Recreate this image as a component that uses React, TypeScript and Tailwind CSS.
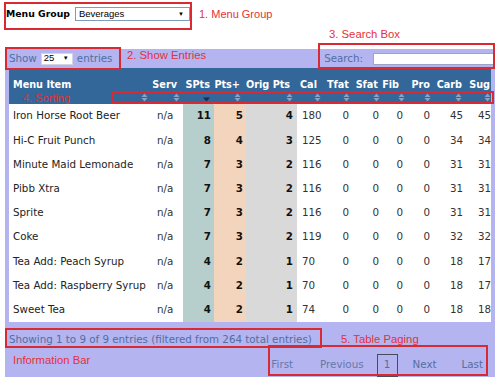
import React from "react";

/* ---------- Types ---------- */
type Col = {
  label: string;
  w: string;
  th: string;
  arrow: string;
  td: string;
};

type Row = (string | number)[];

/* ---------- Data ---------- */
const cols: Col[] = [
  { label: "Menu Item", w: "w-[141px]", th: "text-left pl-[4px]", arrow: "pr-[2px]", td: "text-left pl-[4px] text-[#222]" },
  { label: "Serv", w: "w-[33px]", th: "text-right pr-[6px]", arrow: "pr-[3px]", td: "text-left pl-[7px]" },
  { label: "SPts", w: "w-[31px]", th: "text-right pr-[4px]", arrow: "pr-[4px]", td: "text-right pr-[3px] font-bold text-[#111] bg-[#b6cfcd]" },
  { label: "Pts+", w: "w-[32px]", th: "text-right pr-[6px]", arrow: "pr-[5px]", td: "text-right pr-[3px] font-bold text-[#111] bg-[#f3d4bd]" },
  { label: "Orig Pts", w: "w-[51px]", th: "text-right pr-[7px]", arrow: "pr-[4px]", td: "text-right pr-[4px] font-bold text-[#111] bg-[#d9d9d9]" },
  { label: "Cal", w: "w-[29px]", th: "text-left pl-[3px]", arrow: "pr-[5px]", td: "text-left pl-[5px]" },
  { label: "Tfat", w: "w-[28px]", th: "text-right pr-[5px]", arrow: "pr-[4px]", td: "text-right pr-[5px]" },
  { label: "Sfat", w: "w-[28px]", th: "text-right pr-[4px]", arrow: "pr-[2px]", td: "text-right pr-[3px]" },
  { label: "Fib", w: "w-[25px]", th: "text-right pr-[8px]", arrow: "pr-[2px]", td: "text-right pr-[4px]" },
  { label: "Pro", w: "w-[27px]", th: "text-right pr-[4px]", arrow: "pr-[3px]", td: "text-right pr-[4px]" },
  { label: "Carb", w: "w-[30px]", th: "text-right pr-[2px]", arrow: "pr-[2px]", td: "text-right pr-[1px]" },
  { label: "Sug", w: "w-[27px]", th: "text-right pr-[1px]", arrow: "pr-[0px]", td: "text-right pr-[0px]" },
];

const rows: Row[] = [
  ["Iron Horse Root Beer", "n/a", 11, 5, 4, 180, 0, 0, 0, 0, 45, 45],
  ["Hi-C Fruit Punch", "n/a", 8, 4, 3, 125, 0, 0, 0, 0, 34, 34],
  ["Minute Maid Lemonade", "n/a", 7, 3, 2, 116, 0, 0, 0, 0, 31, 31],
  ["Pibb Xtra", "n/a", 7, 3, 2, 116, 0, 0, 0, 0, 31, 31],
  ["Sprite", "n/a", 7, 3, 2, 116, 0, 0, 0, 0, 31, 31],
  ["Coke", "n/a", 7, 3, 2, 119, 0, 0, 0, 0, 32, 32],
  ["Tea Add: Peach Syrup", "n/a", 4, 2, 1, 70, 0, 0, 0, 0, 18, 17],
  ["Tea Add: Raspberry Syrup", "n/a", 4, 2, 1, 70, 0, 0, 0, 0, 18, 17],
  ["Sweet Tea", "n/a", 4, 2, 1, 74, 0, 0, 0, 0, 18, 18],
];

/* ---------- Sort arrows ---------- */
function SortIcon({ active }: { active?: boolean }) {
  if (active) {
    return (
      <svg width="7" height="9" viewBox="0 0 7 9">
        <path d="M0 4.5h7L3.5 8.5z" fill="#1c2b47" />
      </svg>
    );
  }
  return (
    <svg width="7" height="9" viewBox="0 0 7 9">
      <path d="M3.5 0.5L6.5 4H0.5z" fill="#8aa1c4" />
      <path d="M0.5 5h6L3.5 8.5z" fill="#8aa1c4" />
    </svg>
  );
}

/* ---------- Main Component ---------- */
export default function App() {
  const red = "border-2 border-[#d92a34]";
  const note = "absolute font-['Liberation_Sans',Arial,sans-serif] text-[#e4313b] leading-[14px] whitespace-nowrap";

  return (
    <div className="relative w-[500px] h-[384px] bg-white overflow-hidden font-['DejaVu_Sans',sans-serif]">
      {/* menu group */}
      <div className="h-[49px] pt-[7px] pl-[6px]">
        <div className="h-[14px] flex items-center gap-[5px]">
          <span className="text-[9.3px] font-bold text-black">Menu Group</span>
          <div className="w-[115px] h-[14px] bg-white border border-[#7f9db9] flex items-center justify-between pl-[3px] pr-[5px] font-['Liberation_Sans',Arial,sans-serif] text-[9.5px] text-black">
            <span>Beverages</span>
            <span className="text-[6px]">▼</span>
          </div>
        </div>
      </div>

      {/* lavender wrapper */}
      <div className="ml-[5px] w-[490px] bg-[#b4b4f0]">
        <div className="h-[19px] flex items-center justify-between pl-[4px] text-[10.3px] text-[#4f6fa3]">
          <div className="flex items-center">
            <span>Show</span>
            <span className="ml-[4px] w-[32px] h-[12px] bg-white border border-[#d4d4e4] flex items-center justify-between pl-[2px] pr-[3px] font-['Liberation_Sans',Arial,sans-serif] text-[9.5px] text-black">
              25<span className="text-[6px]">▼</span>
            </span>
            <span className="ml-[4px]">entries</span>
          </div>
          <div className="flex items-center">
            <span>Search:</span>
            <span className="ml-[10px] w-[122px] h-[12px] bg-white border border-[#9fa2c2]" />
          </div>
        </div>

        <table className="ml-[4px] w-[482px] table-fixed border-collapse">
          <colgroup>
            {cols.map((c) => (
              <col key={c.label} className={c.w} />
            ))}
          </colgroup>
          <thead>
            <tr className="bg-[#336699] h-[36px]">
              {cols.map((c) => (
                <th key={c.label} className="p-0 align-top font-bold text-white text-[9.7px]">
                  <div className={`mt-[11px] h-[12px] leading-[12px] whitespace-nowrap ${c.th}`}>{c.label}</div>
                  <div className={`mt-[2px] h-[9px] flex justify-end ${c.arrow}`}>
                    <SortIcon active={c.label === "SPts"} />
                  </div>
                </th>
              ))}
            </tr>
          </thead>
          <tbody className="bg-white text-[10.3px] text-[#333]">
            {rows.map((r, i) => (
              <tr key={i} className="h-[24.2px]">
                {r.map((v, j) => (
                  <td key={j} className={`p-0 whitespace-nowrap ${cols[j].td}`}>
                    {v}
                  </td>
                ))}
              </tr>
            ))}
          </tbody>
        </table>

        <div className="h-[23px] pt-[11px] pl-[4px] leading-[12px] text-[10.3px] text-[#4f6fa3] whitespace-nowrap">
          Showing 1 to 9 of 9 entries (filtered from 264 total entries)
        </div>

        <div className="mt-[9px] h-[23px] flex items-center justify-end pr-[12px] text-[10.3px]">
          <span className="text-[#6579a6]">First</span>
          <span className="ml-[27px] text-[#6579a6]">Previous</span>
          <span className="ml-[13px] w-[21px] h-[23px] border border-[#4b4b5e] flex items-center justify-center text-[#55709f]">1</span>
          <span className="ml-[15px] text-[#55709f]">Next</span>
          <span className="ml-[25px] text-[#55709f]">Last</span>
        </div>
      </div>

      {/* annotations */}
      <div className={`absolute left-[4px] top-[2px] w-[188px] h-[28px] ${red}`} />
      <span className={`${note} left-[199px] top-[7px] text-[11px]`}>1. Menu Group</span>

      <div className={`absolute left-[5px] top-[47px] w-[116px] h-[23px] ${red}`} />
      <span className={`${note} left-[127px] top-[48px] text-[11.3px]`}>2. Show Entries</span>

      <span className={`${note} left-[329px] top-[27px] text-[11.3px]`}>3. Search Box</span>
      <div className={`absolute left-[318px] top-[43px] w-[177px] h-[26px] ${red}`} />

      <span className={`${note} left-[23px] top-[91px] text-[11px]`}>4. Sorting</span>
      <div className={`absolute left-[112px] top-[91px] w-[382px] h-[13px] ${red}`} />

      <div className={`absolute left-[5px] top-[328px] w-[317px] h-[20px] ${red}`} />
      <span className={`${note} left-[341px] top-[332px] text-[11.3px]`}>5. Table Paging</span>
      <span className={`${note} left-[13px] top-[353px] text-[11.3px]`}>Information Bar</span>
      <div className={`absolute left-[268px] top-[345px] w-[220px] h-[31px] ${red}`} />
    </div>
  );
}
